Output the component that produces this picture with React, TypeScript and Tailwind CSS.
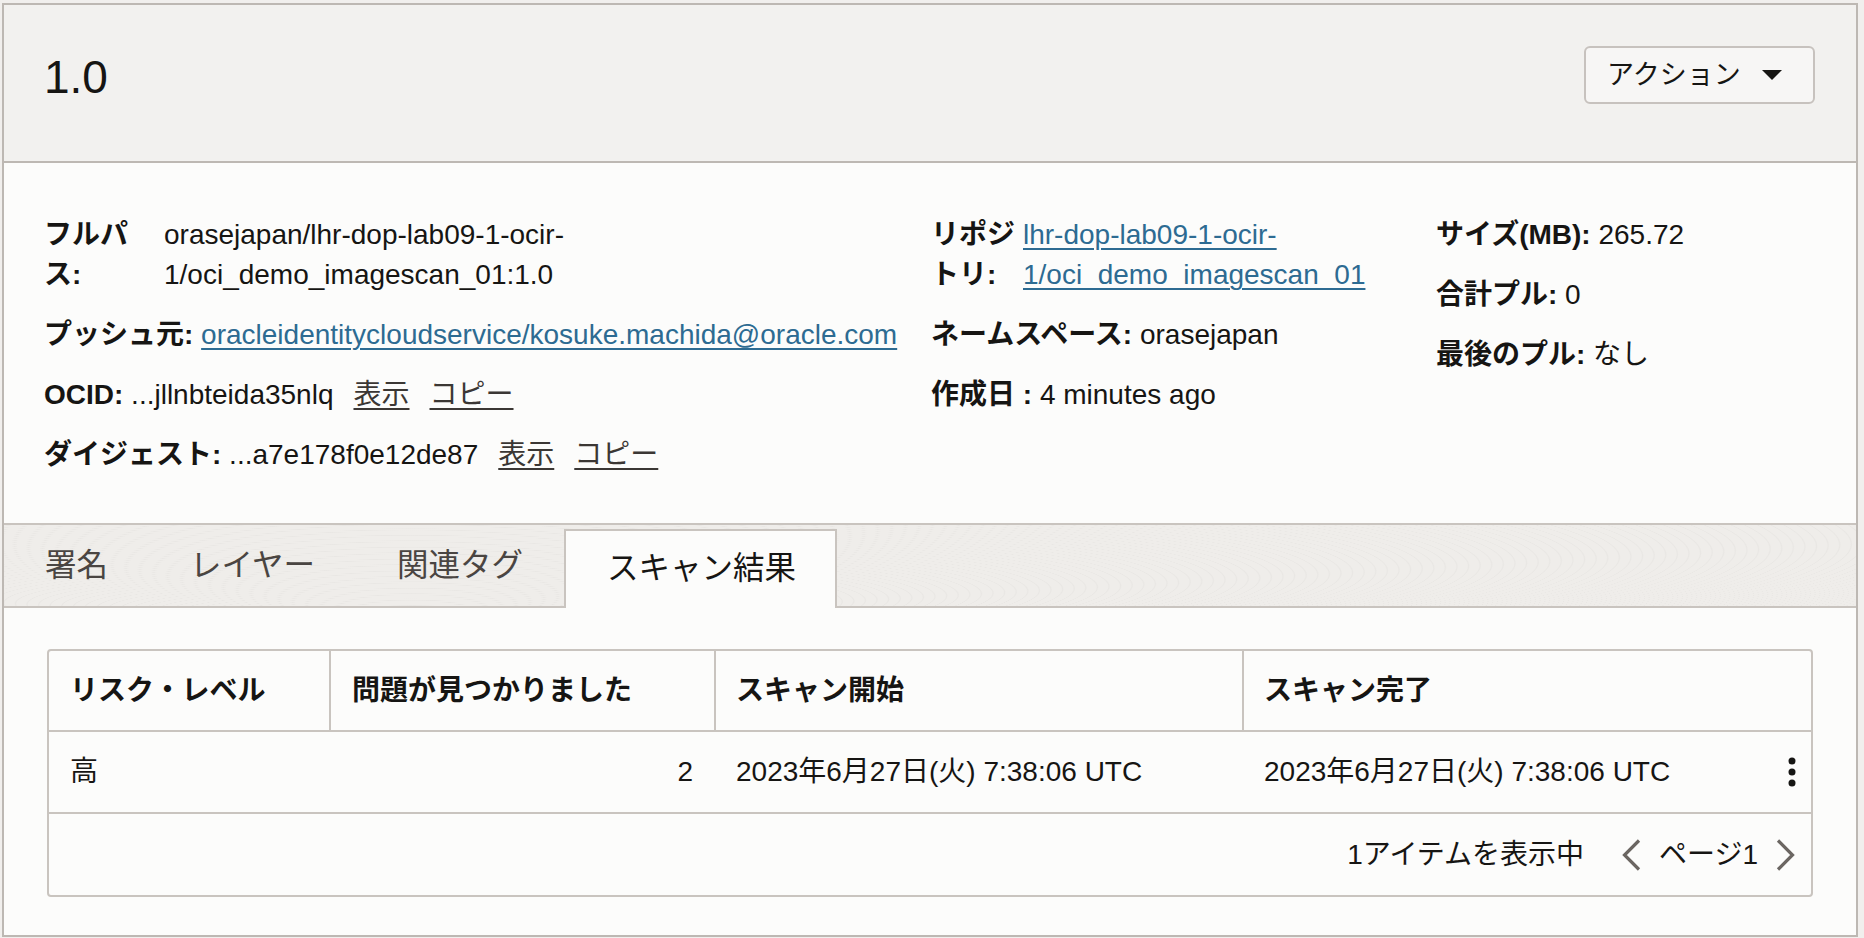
import React from "react";

const ink = "text-[#161513]";

function Label({ children }: { children: React.ReactNode }) {
  return <span className="font-bold">{children}</span>;
}

function ActionLink({ children }: { children: React.ReactNode }) {
  return (
    <span className="ml-[20px] text-[#3b3734] underline underline-offset-[4px] decoration-[1.5px] cursor-pointer">
      {children}
    </span>
  );
}

function Chevron({ dir }: { dir: "left" | "right" }) {
  return (
    <svg width="19" height="32" viewBox="0 0 19 32" fill="none">
      <path
        d={dir === "left" ? "M17 1.5 L2.5 16 L17 30.5" : "M2 1.5 L16.5 16 L2 30.5"}
        stroke="#6b6662"
        strokeWidth="3.2"
      />
    </svg>
  );
}

function Kebab() {
  return (
    <svg width="8" height="30" viewBox="0 0 8 30" fill="#161513">
      <circle cx="4" cy="4" r="3.5" />
      <circle cx="4" cy="15" r="3.5" />
      <circle cx="4" cy="26" r="3.5" />
    </svg>
  );
}

export default function App() {
  const tabs = ["署名", "レイヤー", "関連タグ"];

  return (
    <div
      className={`h-[938px] w-[1864px] overflow-hidden bg-[#f1efed] pt-[3px] pl-[2px] font-['Liberation_Sans','Noto_Sans_CJK_JP',sans-serif] ${ink}`}
    >
      <div className="w-[1856px] border-2 border-[#bdb8b3] bg-[#fcfcfb]">
        {/* ヘッダー */}
        <div className="flex h-[158px] items-start justify-between border-b-2 border-[#bdb8b3] bg-[#f2f1ef] pl-[40px] pr-[41px] pt-[41px]">
          <h1 className="mt-[8px] text-[46px] font-normal leading-none">1.0</h1>
          <button className="flex h-[58px] w-[231px] items-center gap-[21px] rounded-[6px] border-2 border-[#c7c2be] bg-[#f7f6f5] pl-[21px] text-[27px]">
            <span>アクション</span>
            <svg width="20" height="10" viewBox="0 0 20 10">
              <path d="M0 0 H20 L10 10 Z" fill="#161513" />
            </svg>
          </button>
        </div>

        {/* 詳細情報 */}
        <div className="grid grid-cols-[862px_480px_1fr] gap-x-[25px] px-[40px] pt-[52px] pb-[48px] text-[28px] leading-[40px]">
          <div className="flex flex-col gap-[20px]">
            <div className="flex">
              <span className="w-[110px] shrink-0">
                <Label>フルパス:</Label>
              </span>
              <span className="ml-[10px]">
                orasejapan/lhr-dop-lab09-1-ocir-
                <br />
                1/oci_demo_imagescan_01:1.0
              </span>
            </div>
            <div className="whitespace-nowrap">
              <Label>プッシュ元:</Label>{" "}
              <a className="text-[#2d6b92] underline underline-offset-[4px] decoration-[1.5px]">
                oracleidentitycloudservice/kosuke.machida@oracle.com
              </a>
            </div>
            <div className="whitespace-nowrap">
              <Label>OCID:</Label> ...jllnbteida35nlq
              <ActionLink>表示</ActionLink>
              <ActionLink>コピー</ActionLink>
            </div>
            <div className="whitespace-nowrap">
              <Label>ダイジェスト:</Label> ...a7e178f0e12de87
              <ActionLink>表示</ActionLink>
              <ActionLink>コピー</ActionLink>
            </div>
          </div>

          <div className="flex flex-col gap-[20px]">
            <div className="flex">
              <span className="w-[86px] shrink-0">
                <Label>リポジトリ:</Label>
              </span>
              <a className="ml-[6px] text-[#2d6b92] underline underline-offset-[4px] decoration-[1.5px]">
                lhr-dop-lab09-1-ocir-
                <br />
                1/oci_demo_imagescan_01
              </a>
            </div>
            <div className="whitespace-nowrap">
              <Label>ネームスペース:</Label> orasejapan
            </div>
            <div className="whitespace-nowrap">
              <Label>作成日 :</Label> 4 minutes ago
            </div>
          </div>

          <div className="flex flex-col gap-[20px]">
            <div className="whitespace-nowrap">
              <Label>サイズ(MB):</Label> 265.72
            </div>
            <div className="whitespace-nowrap">
              <Label>合計プル:</Label> 0
            </div>
            <div className="whitespace-nowrap">
              <Label>最後のプル:</Label> なし
            </div>
          </div>
        </div>

        {/* タブ */}
        <div className="flex h-[85px] items-end border-y-2 border-[#c9c4bf] bg-[#efedea] bg-[repeating-radial-gradient(ellipse_at_22%_125%,#efedea_0px,#efedea_7px,#e9e7e4_8px,#efedea_9px)] text-[31.5px] leading-none">
          {tabs.map((t) => (
            <div key={t} className="flex h-full items-center px-[41px] text-[#4a4542]">
              {t}
            </div>
          ))}
          <div className="-mb-[2px] flex h-[79px] items-center border-2 border-b-0 border-[#c9c4bf] bg-[#fcfcfb] pl-[41px] pr-[39px] pb-[2px] text-[#161513]">
            スキャン結果
          </div>
        </div>

        {/* スキャン結果テーブル */}
        <div className="px-[43px] pt-[41px] pb-[38px] text-[28px]">
          <div className="rounded-[4px] border-2 border-[#c9c4bf]">
            <div className="grid h-[81px] grid-cols-[280px_385px_528px_1fr] border-b-2 border-[#c9c4bf] font-bold">
              <div className="flex items-center px-[21px]">リスク・レベル</div>
              <div className="flex items-center border-l-2 border-[#c9c4bf] px-[21px]">問題が見つかりました</div>
              <div className="flex items-center border-l-2 border-[#c9c4bf] px-[20px]">スキャン開始</div>
              <div className="flex items-center border-l-2 border-[#c9c4bf] px-[20px]">スキャン完了</div>
            </div>
            <div className="grid h-[82px] grid-cols-[280px_385px_528px_1fr] border-b-2 border-[#c9c4bf]">
              <div className="flex items-center px-[21px]">高</div>
              <div className="flex items-center justify-end px-[21px]">2</div>
              <div className="flex items-center px-[22px]">2023年6月27日(火) 7:38:06 UTC</div>
              <div className="flex items-center justify-between pl-[22px] pr-[15px]">
                <span>2023年6月27日(火) 7:38:06 UTC</span>
                <Kebab />
              </div>
            </div>
            <div className="flex h-[81px] items-center justify-end pr-[16px]">
              <span>1アイテムを表示中</span>
              <span className="ml-[38px] flex items-center">
                <Chevron dir="left" />
              </span>
              <span className="ml-[18px]">ページ1</span>
              <span className="ml-[18px] flex items-center">
                <Chevron dir="right" />
              </span>
            </div>
          </div>
        </div>
      </div>
    </div>
  );
}
